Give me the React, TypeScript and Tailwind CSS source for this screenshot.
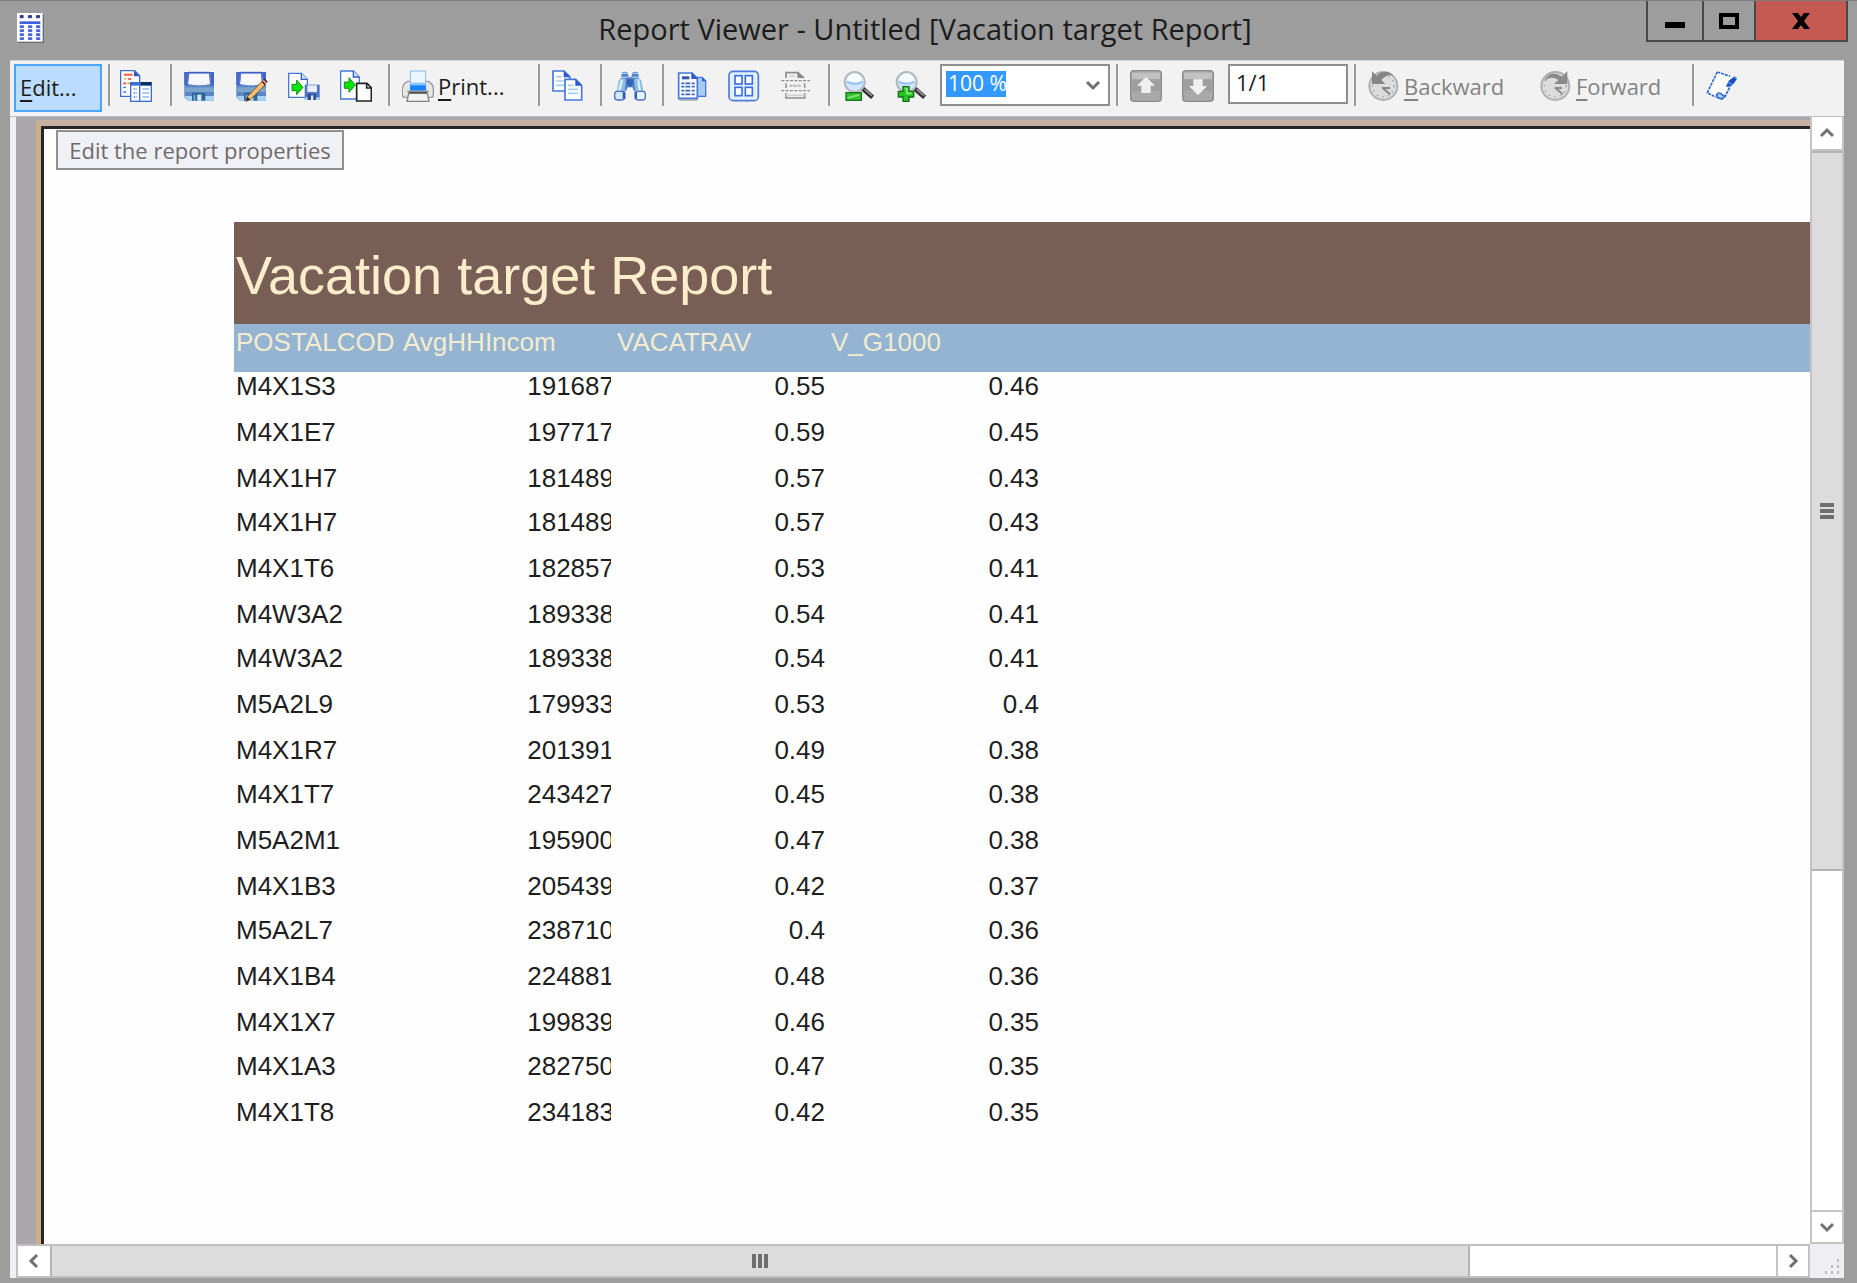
import React from "react";

type Row = [string, string, string, string];

const rows: Row[] = [
  ["M4X1S3", "191687", "0.55", "0.46"],
  ["M4X1E7", "197717", "0.59", "0.45"],
  ["M4X1H7", "181489", "0.57", "0.43"],
  ["M4X1H7", "181489", "0.57", "0.43"],
  ["M4X1T6", "182857", "0.53", "0.41"],
  ["M4W3A2", "189338", "0.54", "0.41"],
  ["M4W3A2", "189338", "0.54", "0.41"],
  ["M5A2L9", "179933", "0.53", "0.4"],
  ["M4X1R7", "201391", "0.49", "0.38"],
  ["M4X1T7", "243427", "0.45", "0.38"],
  ["M5A2M1", "195900", "0.47", "0.38"],
  ["M4X1B3", "205439", "0.42", "0.37"],
  ["M5A2L7", "238710", "0.4", "0.36"],
  ["M4X1B4", "224881", "0.48", "0.36"],
  ["M4X1X7", "199839", "0.46", "0.35"],
  ["M4X1A3", "282750", "0.47", "0.35"],
  ["M4X1T8", "234183", "0.42", "0.35"],
];

const headers = ["POSTALCOD", "AvgHHIncom", "VACATRAV", "V_G1000"];

function Icon({ children }: { children: React.ReactNode }) {
  return (
    <svg viewBox="0 0 96 96" className="size-8 shrink-0" aria-hidden="true" fill="none">
      {children}
    </svg>
  );
}

function TableIcon() {
  return (
    <svg viewBox="0 0 81 90" className="h-[30px] w-[27px]" aria-hidden="true">
      <rect x="3" y="4" width="78" height="86" fill="#6b6b6b" />
      <rect x="0" y="0" width="77" height="86" fill="#fff" />
      {[8, 33, 57].map((x) => (
        <g key={x} fill="#4466e0">
          <rect x={x} y="6" width="12" height="10" rx="3" fill="#2d3f9e" />
          {[37, 49, 61, 73].map((y) => (
            <rect key={y} x={x} y={y} width="13" height="8" rx="2" />
          ))}
        </g>
      ))}
      <rect x="8" y="25" width="62" height="8" fill="#3d5fdc" />
    </svg>
  );
}

function SourceIcon() {
  return (
    <Icon>
      <path d="M2 2h42l15 15v62H2z" fill="#fff" stroke="#3c6fd4" strokeWidth="4" />
      <path d="M42 2v17h17z" fill="#2a54c0" />
      <path d="M12 14h26" stroke="#ff5a2a" strokeWidth="6" />
      <path d="M24 27h10M10 40h8" stroke="#e8413a" strokeWidth="5" />
      <path d="M12 26h6M22 40h9" stroke="#ffa03a" strokeWidth="5" />
      <path d="M10 52h8M10 66h8" stroke="#3c6fd4" strokeWidth="4" />
      <rect x="32" y="38" width="62" height="56" fill="#fff" stroke="#3c6fd4" strokeWidth="4" />
      <rect x="32" y="36" width="62" height="11" fill="#3c6fd4" />
      <rect x="62" y="36" width="32" height="10" fill="#0b2f63" />
      <path d="M59 47v46" stroke="#3c6fd4" strokeWidth="4" />
      <path d="M41 57h10M41 69h10M41 81h10" stroke="#5b84dc" strokeWidth="4" strokeDasharray="5 3" />
      <path d="M67 57h20M67 69h20M67 81h20" stroke="#8cb8f0" strokeWidth="4" />
    </Icon>
  );
}

function Disk() {
  return (
    <>
      <path d="M1 6h89v86H12L1 82z" fill="#5b87c9" />
      <path d="M1 6h11v40H1zM79 6h11v40H79z" fill="#4068c8" />
      <path d="M1 52h89v14H1z" fill="#7da5cc" />
      <path d="M1 78h89v14H12z" fill="#a9d3f3" />
      <path d="M16 10h59l4 32q-33 8-67 0z" fill="#f6f7fb" />
      <path d="M12 8h66" stroke="#3c5fc0" strokeWidth="5" />
      <path d="M13 10l-3 32M77 10l3 32" stroke="#6b6fc8" strokeWidth="4" />
      <path d="M24 68h40v24H24z" fill="#2f6599" />
      <path d="M40 74h12v18H40z" fill="#d9ecf8" />
      <path d="M29 74h5v18h-5z" fill="#7fb0da" />
    </>
  );
}

function SaveIcon() {
  return <Icon><Disk /></Icon>;
}

function SaveAsIcon() {
  return (
    <Icon>
      <Disk />
      <path d="M34 80L78 34l10 10-44 44-14 6z" fill="#f0bd72" stroke="#8a5a2a" strokeWidth="3" />
      <path d="M76 36l10-9 8 9-8 9z" fill="#e98a86" />
      <path d="M84 27l10 10M78 34l9 10" stroke="#3a2422" strokeWidth="4" />
      <path d="M34 80l-5 14 14-6z" fill="#3a2a20" />
    </Icon>
  );
}

function ExportIcon() {
  return (
    <Icon>
      <path d="M2 10h38l18 18v54H2z" fill="#fff" stroke="#4678da" strokeWidth="4" />
      <path d="M40 10v18h18" fill="#cfe3fb" stroke="#2f5fcc" strokeWidth="4" />
      <path d="M12 43h14V30l19 22-19 22V62H12z" fill="#08e408" stroke="#1b8a1b" strokeWidth="3" />
      <rect x="50" y="44" width="45" height="46" fill="#4f76c6" />
      <rect x="58" y="46" width="29" height="20" fill="#e8edf8" />
      <rect x="50" y="82" width="45" height="8" fill="#a9d3f3" />
      <rect x="59" y="72" width="25" height="18" fill="#2f4f8c" />
      <rect x="69" y="76" width="7" height="14" fill="#dcebf8" />
    </Icon>
  );
}

function ExportNewIcon() {
  return (
    <Icon>
      <path d="M2 3h38l18 18v66H2z" fill="#fff" stroke="#4678da" strokeWidth="4" />
      <path d="M40 3v18h18" fill="#cfe3fb" stroke="#2f5fcc" strokeWidth="4" />
      <path d="M13 36h14V23l19 22-19 22V55H13z" fill="#08e408" stroke="#1b8a1b" strokeWidth="3" />
      <path d="M50 40h31l13 13v40H50z" fill="#fff" stroke="#222" strokeWidth="5" />
      <path d="M80 40v14h14" stroke="#222" strokeWidth="5" />
    </Icon>
  );
}

function PrinterIcon() {
  return (
    <Icon>
      <path d="M18 34h60q14 6 16 20v20q0 8-8 8H9q-8 0-8-8V54q4-16 17-20z" fill="#e6e6e6" stroke="#9a9a9a" strokeWidth="4" />
      <rect x="25" y="3" width="46" height="42" fill="#e9f5ff" stroke="#90b9e8" strokeWidth="3" />
      <path d="M24 42h48v20H24z" fill="#1583ff" />
      <path d="M24 38h48v8H24z" fill="#8cc6ff" />
      <path d="M16 64h64" stroke="#8a8a8a" strokeWidth="4" />
      <path d="M20 70h56l5 24H15z" fill="#f2f2f2" stroke="#858585" strokeWidth="4" />
      <path d="M20 68h56" stroke="#555" strokeWidth="4" />
    </Icon>
  );
}

function CopyIcon() {
  return (
    <Icon>
      <path d="M3 3h33l17 17v43H3z" fill="#fff" stroke="#4678da" strokeWidth="5" />
      <path d="M35 2v20h20z" fill="#2c58c8" />
      <path d="M11 20h18M11 33h26M11 46h26" stroke="#a9cdf5" strokeWidth="5" />
      <path d="M39 28h32l18 18v44H39z" fill="#fff" stroke="#4678da" strokeWidth="5" />
      <path d="M70 27v20h20z" fill="#2c58c8" />
      <path d="M48 46h16M48 58h30M48 70h30" stroke="#a9cdf5" strokeWidth="5" />
    </Icon>
  );
}

function BinocularsIcon() {
  return (
    <Icon>
      <path d="M24 8q8-5 17 0l3 14h8l3-14q9-5 17 0l4 20 12 36H60l-5-12H41l-5 12H8l12-36z" fill="#5583c6" />
      <path d="M14 30q10-8 22-2l-4 36H8z" fill="#8dbbe6" />
      <path d="M82 30q-10-8-22-2l4 36h24z" fill="#8dbbe6" />
      <path d="M20 30l-9 32h9l8-34zM70 28l3 34h8l-5-34z" fill="#d7effc" />
      <path d="M22 10h18M56 10h18M21 22h20M55 22h20" stroke="#a8cff2" strokeWidth="4" />
      <path d="M38 28h20v12q-10 22-20 0z" fill="#3164b8" />
      <rect x="2" y="64" width="30" height="26" rx="8" fill="#d3ebfa" stroke="#4c6fc4" strokeWidth="4" />
      <rect x="64" y="64" width="30" height="26" rx="8" fill="#e5f5fc" stroke="#4c6fc4" strokeWidth="4" />
      <path d="M26 66h8v20h-8zM62 66h7v20h-7z" fill="#315fae" />
    </Icon>
  );
}

function PageLayoutIcon() {
  return (
    <Icon>
      <path d="M62 22h16l11 11v46H62z" fill="#a6ccf2" stroke="#4678da" strokeWidth="4" />
      <path d="M78 20v14h13z" fill="#2c58c8" />
      <path d="M8 9h40l16 16v60H8z" fill="#fff" stroke="#4678da" strokeWidth="5" />
      <path d="M46 7v20h20z" fill="#2c58c8" />
      <path d="M10 90h54" stroke="#969aa5" strokeWidth="4" />
      <rect x="18" y="19" width="22" height="9" fill="#3454ae" />
      <path d="M16 40h42M16 50h42M16 62h42M16 73h42" stroke="#3f62be" strokeWidth="5" strokeDasharray="9 3 15 4" />
    </Icon>
  );
}

function GridIcon() {
  return (
    <Icon>
      <rect x="3" y="4" width="88" height="88" rx="12" fill="#e2effc" stroke="#4b7bdc" strokeWidth="5" />
      {[21, 52].map((x) =>
        [17, 52].map((y) => (
          <rect key={`${x}-${y}`} x={x} y={y} width="21" height="25" fill="#fff" stroke="#3d70d8" strokeWidth="5" />
        )),
      )}
    </Icon>
  );
}

function PageBreakIcon() {
  return (
    <Icon>
      <path d="M18 24V8h36l18 16" stroke="#8e8e8e" strokeWidth="5" />
      <path d="M52 6v18h22z" fill="#888" />
      <path d="M28 18h18" stroke="#c4c4c4" strokeWidth="4" />
      <path d="M4 32h86M4 62h86" stroke="#8e8e8e" strokeWidth="4" strokeDasharray="9 4" />
      <path d="M18 40v14M74 40v14" stroke="#999" strokeWidth="5" />
      <path d="M28 47h36" stroke="#b8b8b8" strokeWidth="6" strokeDasharray="10 2" />
      <path d="M18 70v14h56V70" stroke="#8e8e8e" strokeWidth="5" />
      <path d="M18 76h56" stroke="#d2d2d2" strokeWidth="5" />
    </Icon>
  );
}

function ZoomIcon({ plus }: { plus?: boolean }) {
  return (
    <Icon>
      <path d="M60 54l32 28" stroke="#333" strokeWidth="14" />
      <path d="M68 58l22 19" stroke="#999" strokeWidth="5" />
      <circle cx="38" cy="36" r="30" fill="#cfe6fb" stroke="#b4b9bf" strokeWidth="6" />
      <path d="M14 34a24 24 0 0 1 48 0q-24 12-48 0z" fill="#f7fbff" />
      <path d="M15 35q23 12 46 0" stroke="#90c2f3" strokeWidth="7" />
      {plus ? (
        <path d="M27 50h18v14h14v17H45v13H27V81H13V64h14z" fill="#24c424" stroke="#147014" strokeWidth="4" />
      ) : (
        <rect x="12" y="68" width="46" height="23" fill="#30c230" stroke="#187818" strokeWidth="4" />
      )}
      {plus ? (
        <path d="M32 56h7v14h14" stroke="#8aed7c" strokeWidth="5" />
      ) : (
        <path d="M17 84L52 74" stroke="#7de36f" strokeWidth="6" />
      )}
    </Icon>
  );
}

function ArrowIcon({ down }: { down?: boolean }) {
  return (
    <Icon>
      <rect x="2" y="2" width="92" height="92" rx="10" fill="#a9a9a9" stroke="#8a8a8a" strokeWidth="4" />
      <path d="M6 8h84v20H6z" fill="#c2c2c2" />
      <path d="M6 28h84v34H6z" fill="#9e9e9e" />
      <path d={down ? "M34 28h28v20h13L48 76 21 48h13z" : "M48 20l27 27H62v22H34V47H21z"} fill="#f0f0f0" />
    </Icon>
  );
}

function HistoryIcon({ forward }: { forward?: boolean }) {
  return (
    <Icon>
      <circle cx="46" cy="48" r="42" fill="#dcdcdc" stroke="#b0b0b0" strokeWidth="6" />
      <circle cx="46" cy="48" r="33" stroke="#9c9c9c" strokeWidth="4" strokeDasharray="4 13" />
      {forward ? (
        <>
          <path d="M12 32Q32-4 66 20L82 3v39H42l13-12Q36 16 12 32z" fill="#8b8b8b" />
          <path d="M44 54h22M46 54l22 19" stroke="#8b8b8b" strokeWidth="6" />
        </>
      ) : (
        <>
          <path d="M12 4l14 14Q48-6 76 16 56 12 40 30l12 12H12z" fill="#858585" />
          <path d="M42 54h24M44 54l22 19" stroke="#858585" strokeWidth="6" />
        </>
      )}
    </Icon>
  );
}

function NoteIcon() {
  return (
    <Icon>
      <path d="M34 6l40 12-22 68H26L4 68z" fill="#fff" />
      <path d="M34 6l38 13M34 6L4 68l26 14M76 42L56 82" stroke="#2b68d6" strokeWidth="5" strokeDasharray="9 3" />
      <path d="M32 74q6-10 16 0l8 4-8 9-14-4z" fill="#a8ccf6" stroke="#2b68d6" strokeWidth="5" />
      <path d="M60 50l8-18 16-12 9 6-9 14-16 10z" fill="#1c50c0" />
      <path d="M84 20l9 6M66 36l14 9" stroke="#5b95ec" strokeWidth="4" />
    </Icon>
  );
}

function Chevron({ direction }: { direction: "up" | "down" | "left" | "right" }) {
  const paths = {
    up: "M3 12l6-6 6 6",
    down: "M3 6l6 6 6-6",
    left: "M12 3L6 9l6 6",
    right: "M6 3l6 6-6 6",
  };
  return (
    <svg viewBox="0 0 18 18" className="size-[18px]" fill="none" stroke="#707070" strokeWidth="3" aria-hidden="true">
      <path d={paths[direction]} />
    </svg>
  );
}

function Separator() {
  return <div className="mr-0.5 ml-1.5 h-[42px] w-0.5 shrink-0 bg-[#9a9a9a]" />;
}

function Tool({ label, children }: { label: string; children: React.ReactNode }) {
  return (
    <button type="button" aria-label={label} className="flex h-12 w-[52px] shrink-0 items-center justify-center pb-1">
      {children}
    </button>
  );
}

function Mnemonic({ text }: { text: string }) {
  return (
    <span className="whitespace-nowrap">
      <span className="underline decoration-2 underline-offset-4">{text[0]}</span>
      {text.slice(1)}
    </span>
  );
}

function TitleBar() {
  return (
    <header className="grid h-[60px] shrink-0 grid-cols-[202px_1fr_209px] border-t border-[#7d7d7d]">
      <div className="pt-3 pl-[17px]">
        <TableIcon />
      </div>
      <h1 className="truncate text-center text-[29px] leading-[56px] text-[#1c1c1c]">
        Report Viewer - Untitled [Vacation target Report]
      </h1>
      <div className="mr-[9px] -ml-0.5 flex h-[41px] border-2 border-t-0 border-[#484848]">
        <button type="button" aria-label="Minimize" className="flex w-[56px] items-center justify-center border-r-2 border-[#484848] pt-2">
          <span className="h-1.5 w-5 bg-black" />
        </button>
        <button type="button" aria-label="Maximize" className="flex w-[52px] items-center justify-center border-r-2 border-[#484848]">
          <span className="h-4 w-5 border-4 border-black" />
        </button>
        <button type="button" aria-label="Close" className="flex flex-1 items-center justify-center bg-[#c45a52]">
          <svg viewBox="0 0 18 16" className="h-4 w-[18px]" aria-hidden="true">
            <path d="M0 0h6l3 4 3-4h6l-6 8 6 8h-6l-3-4-3 4H0l6-8z" fill="#000" />
          </svg>
        </button>
      </div>
    </header>
  );
}

function Toolbar() {
  return (
    <div role="toolbar" className="flex h-[57px] shrink-0 items-start overflow-hidden border-t border-b border-t-[#c9d3e4] border-b-[#bdbdc2] bg-[#f2f2f2] pt-[3px] pl-1 text-[22px] text-[#1c1c1c]">
      <button type="button" className="flex h-12 w-[88px] shrink-0 items-center border-2 border-[#4aa5fb] bg-[#bcdcfe] pb-0.5 pl-1">
        <Mnemonic text="Edit..." />
      </button>
      <Separator />
      <button type="button" aria-label="Change source" className="flex h-12 w-[52px] shrink-0 items-center pb-1 pl-2">
        <SourceIcon />
      </button>
      <Separator />
      <Tool label="Save"><SaveIcon /></Tool>
      <Tool label="Save as"><SaveAsIcon /></Tool>
      <Tool label="Export"><ExportIcon /></Tool>
      <Tool label="Export to new document"><ExportNewIcon /></Tool>
      <Separator />
      <button type="button" className="flex h-12 w-[140px] shrink-0 items-center gap-1 pb-1 pl-2.5">
        <PrinterIcon />
        <Mnemonic text="Print..." />
      </button>
      <Separator />
      <Tool label="Copy"><CopyIcon /></Tool>
      <Separator />
      <Tool label="Find"><BinocularsIcon /></Tool>
      <Separator />
      <Tool label="Page layout"><PageLayoutIcon /></Tool>
      <Tool label="Multiple pages"><GridIcon /></Tool>
      <Tool label="Page breaks"><PageBreakIcon /></Tool>
      <Separator />
      <Tool label="Zoom out"><ZoomIcon /></Tool>
      <Tool label="Zoom in"><ZoomIcon plus /></Tool>
      <div className="relative ml-1 h-[42px] w-[170px] shrink-0 border-2 border-[#8e8e8e] bg-white">
        <select
          aria-label="Zoom"
          className="size-full appearance-none bg-[linear-gradient(#3399ff,#3399ff)] bg-[length:60px_26px] bg-[position:4px_4px] bg-no-repeat pb-1 pl-1.5 text-[21px] text-white outline-none"
        >
          <option>100 %</option>
        </select>
        <span className="pointer-events-none absolute top-2.5 right-1.5">
          <Chevron direction="down" />
        </span>
      </div>
      <Separator />
      <Tool label="Previous page"><ArrowIcon /></Tool>
      <Tool label="Next page"><ArrowIcon down /></Tool>
      <input
        aria-label="Page"
        defaultValue="1/1"
        className="ml-1 h-10 w-[120px] shrink-0 border-2 border-[#8e8e8e] bg-white pb-1 pl-1.5 text-[22px] outline-none"
      />
      <Separator />
      <button type="button" className="flex h-12 w-[172px] shrink-0 items-center gap-1 pb-1 pl-2.5 text-[#838383]">
        <HistoryIcon />
        <Mnemonic text="Backward" />
      </button>
      <button type="button" className="flex h-12 w-[156px] shrink-0 items-center gap-1 pb-1 pl-2.5 text-[#838383]">
        <HistoryIcon forward />
        <Mnemonic text="Forward" />
      </button>
      <Separator />
      <Tool label="Notes"><NoteIcon /></Tool>
    </div>
  );
}

function Report() {
  return (
    <article className="pt-[93px] pl-[190px] font-['Liberation_Sans',Arial,sans-serif] text-[26px] leading-7 text-[#1e1e1e]">
      <h2 className="h-[102px] bg-[#795e55] pt-6 pl-0.5 text-[54px] leading-[58px] text-[#fbeccb]">
        Vacation target Report
      </h2>
      <table className="w-full table-fixed border-collapse text-left">
        <colgroup>
          <col className="w-[167px]" />
          <col className="w-[214px]" />
          <col className="w-[214px]" />
          <col className="w-[214px]" />
          <col />
        </colgroup>
        <thead className="bg-[#94b4d2] text-[#f3ecd0]">
          <tr className="h-12 align-top">
            {headers.map((h) => (
              <th key={h} scope="col" className="pt-1 pr-0 pl-0.5 font-normal">
                {h}
              </th>
            ))}
            <td />
          </tr>
        </thead>
        <tbody>
          {rows.map(([code, income, travel, spend], i) => (
            <tr key={i} className="h-[46px] align-top nth-[3n]:h-11">
              <td className="p-0 pl-0.5">{code}</td>
              <td className="p-0 pr-1 text-right">
                <div className="overflow-hidden">
                  <div className="-mr-[3px]">{income}</div>
                </div>
              </td>
              <td className="p-0 pr-1 text-right">{travel}</td>
              <td className="p-0 pr-1 text-right">{spend}</td>
              <td />
            </tr>
          ))}
        </tbody>
      </table>
    </article>
  );
}

function VerticalScrollbar() {
  return (
    <div className="flex w-[34px] shrink-0 flex-col border-x-2 border-[#c4c4c4] bg-white">
      <button type="button" aria-label="Scroll up" className="flex h-[34px] items-center justify-center border-b-2 border-[#c4c4c4]">
        <Chevron direction="up" />
      </button>
      <div className="flex flex-1 flex-col">
        <div className="flex h-[68%] flex-col items-center justify-center gap-0.5 border-y-2 border-[#b4b4b4] bg-[#dcdcdc]">
          <span className="h-1 w-3.5 bg-[#6e6e6e]" />
          <span className="h-1 w-3.5 bg-[#6e6e6e]" />
          <span className="h-1 w-3.5 bg-[#6e6e6e]" />
        </div>
      </div>
      <button type="button" aria-label="Scroll down" className="flex h-[34px] items-center justify-center border-y-2 border-[#c4c4c4]">
        <Chevron direction="down" />
      </button>
    </div>
  );
}

function HorizontalScrollbar() {
  return (
    <div className="flex h-[34px] shrink-0 bg-[#efeef2]">
      <div className="flex flex-1 border-y-2 border-l-2 border-[#c0c0c0] bg-white">
        <button type="button" aria-label="Scroll left" className="flex w-8 items-center justify-center">
          <Chevron direction="left" />
        </button>
        <div className="flex flex-1">
          <div className="flex w-[82.3%] items-center justify-center gap-0.5 border-x-2 border-[#b4b4b4] bg-[#dcdcdc]">
            <span className="h-3.5 w-1 bg-[#6e6e6e]" />
            <span className="h-3.5 w-1 bg-[#6e6e6e]" />
            <span className="h-3.5 w-1 bg-[#6e6e6e]" />
          </div>
        </div>
        <button type="button" aria-label="Scroll right" className="flex w-[34px] items-center justify-center border-x-2 border-[#c4c4c4]">
          <Chevron direction="right" />
        </button>
      </div>
      <svg viewBox="0 0 34 34" className="size-[34px]" fill="#bdbdbd" aria-hidden="true">
        <path d="M27 15h2v3h-2zM27 21h2v3h-2zM21 21h2v3h-2zM27 27h2v3h-2zM21 27h2v3h-2zM15 27h2v3h-2z" />
      </svg>
    </div>
  );
}

export default function App() {
  return (
    <div className="flex h-screen flex-col overflow-hidden bg-[#9d9d9d] font-['Open_Sans','Noto_Sans',sans-serif]">
      <TitleBar />
      <main className="mr-[13px] mb-[5px] ml-2.5 flex min-h-0 flex-1 flex-col">
        <Toolbar />
        <div className="flex min-h-0 flex-1 flex-col border-l-[6px] border-[#f1eff3]">
          <div className="flex min-h-0 flex-1">
            <div className="relative min-w-0 flex-1 overflow-hidden bg-[#a9a7aa] pt-[3px] pl-5">
              <div className="h-full border-t-[6px] border-l-[5px] border-t-[#c7b1a5] border-l-[#ccb08e]">
                <div className="h-full border-t-[3px] border-l-[3px] border-[#2b2425] bg-[#fefefe]">
                  <Report />
                </div>
              </div>
              <div role="tooltip" className="absolute top-[13px] left-10 flex h-10 w-[288px] items-center justify-center border-2 border-[#8f8f8f] bg-[#f0f1f6] text-[22px] whitespace-nowrap text-[#6f6a6c]">
                Edit the report properties
              </div>
            </div>
            <VerticalScrollbar />
          </div>
          <HorizontalScrollbar />
        </div>
      </main>
    </div>
  );
}
